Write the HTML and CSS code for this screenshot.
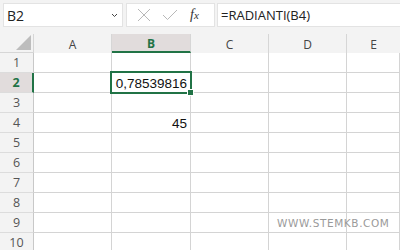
FILE: index.html
```html
<!DOCTYPE html>
<html>
<head>
<meta charset="utf-8">
<link rel="stylesheet" href="styles.css">
</head>
<body>
<div class="app">
  <div class="toolbar">
    <div class="namebox">
      <span class="name">B2</span>
      <svg class="chev" width="7" height="5" viewBox="0 0 7 5"><path d="M1 1 L3.5 3.5 L6 1" fill="none" stroke="#444" stroke-width="1"/></svg>
    </div>
    <div class="fxbox">
      <svg class="ico" width="14" height="14" viewBox="0 0 14 14"><path d="M1 1 L13 13 M13 1 L1 13" stroke="#b8b8b8" stroke-width="1" fill="none"/></svg>
      <svg class="ico" width="16" height="12" viewBox="0 0 16 12"><path d="M1 6 L5.5 10.5 L15 1" stroke="#b8b8b8" stroke-width="1" fill="none"/></svg>
      <span class="fx"><i>f</i><span class="x">x</span></span>
    </div>
    <div class="formula">=RADIANTI(B4)</div>
  </div>
  <div class="sheet">
    <div class="grid">
      <div class="hdr corner"><span class="tri"></span></div>
      <div class="hdr col">A</div>
      <div class="hdr col sel">B</div>
      <div class="hdr col">C</div>
      <div class="hdr col">D</div>
      <div class="hdr col last">E</div>

      <div class="hdr row">1</div><div class="c"></div><div class="c"></div><div class="c"></div><div class="c"></div><div class="c"></div>
      <div class="hdr row sel">2</div><div class="c"></div><div class="c active"><span class="val">0,78539816</span><span class="handle"></span></div><div class="c"></div><div class="c"></div><div class="c"></div>
      <div class="hdr row">3</div><div class="c"></div><div class="c"></div><div class="c"></div><div class="c"></div><div class="c"></div>
      <div class="hdr row">4</div><div class="c"></div><div class="c num">45</div><div class="c"></div><div class="c"></div><div class="c"></div>
      <div class="hdr row">5</div><div class="c"></div><div class="c"></div><div class="c"></div><div class="c"></div><div class="c"></div>
      <div class="hdr row">6</div><div class="c"></div><div class="c"></div><div class="c"></div><div class="c"></div><div class="c"></div>
      <div class="hdr row">7</div><div class="c"></div><div class="c"></div><div class="c"></div><div class="c"></div><div class="c"></div>
      <div class="hdr row">8</div><div class="c"></div><div class="c"></div><div class="c"></div><div class="c"></div><div class="c"></div>
      <div class="hdr row">9</div><div class="c"></div><div class="c"></div><div class="c"></div><div class="c"></div><div class="c"></div>
      <div class="hdr row">10</div><div class="c"></div><div class="c"></div><div class="c"></div><div class="c"></div><div class="c"></div>
    </div>
    <div class="watermark">WWW.STEMKB.COM</div>
  </div>
</div>
</body>
</html>
```
FILE: styles.css
```css
html, body {
  margin: 0;
  padding: 0;
  background: #f3f3f3;
  width: 400px;
  height: 250px;
  overflow: hidden;
}
.app {
  font-family: "Open Sans", "Noto Sans", sans-serif;
}
.toolbar {
  display: flex;
  align-items: stretch;
  height: 24px;
  padding: 3px 0 7px 3px;
  gap: 3px;
}
.namebox {
  width: 120px;
  background: #fff;
  border: 1px solid #e3e3e3;
  box-sizing: border-box;
  display: flex;
  align-items: center;
  justify-content: space-between;
  padding: 0 4px 0 3px;
}
.name {
  font-size: 14px;
  color: #222;
}
.chev { margin-top: 1px; }
.fxbox {
  width: 89px;
  background: #fff;
  border: 1px solid #e3e3e3;
  box-sizing: border-box;
  display: flex;
  align-items: center;
  padding: 0 0 0 10px;
  gap: 11px;
}
.fx {
  font-family: "Liberation Serif", serif;
  font-size: 14px;
  color: #333;
  margin-left: 1px;
}
.fx .x { font-size: 11px; font-style: italic; }
.formula {
  flex: 1;
  background: #fff;
  border: 1px solid #e3e3e3;
  border-right: none;
  box-sizing: border-box;
  font-size: 13px;
  color: #222;
  padding-left: 3px;
  display: flex;
  align-items: center;
  margin-left: -1px;
}
.sheet {
  position: relative;
}
.grid {
  display: grid;
  grid-template-columns: 34px 78px 79px 78px 78px 53px;
  grid-template-rows: 19px repeat(10, 20px);
}
.hdr {
  background: #f3f3f3;
  color: #444;
  font-size: 12px;
  display: flex;
  align-items: center;
  justify-content: center;
  box-sizing: border-box;
}
.hdr.col {
  border-right: 1px solid #d6d6d6;
  padding-top: 1px;
}
.hdr.col.last { border-right: none; }
.hdr.row {
  border-right: 1px solid #c8c8c8;
  border-bottom: 1px solid #dcdcdc;
  font-size: 12.5px;
  color: #555;
}
.hdr.col.sel {
  background: #e1dcdc;
  border-bottom: 2px solid #217346;
  color: #217346;
  font-weight: bold;
  padding-top: 2px;
}
.hdr.row.sel {
  background: #e1dcdc;
  border-right: 2px solid #217346;
  color: #217346;
  font-weight: bold;
}
.corner {
  position: relative;
  border-right: 1px solid #d6d6d6;
  border-bottom: 1px solid #d6d6d6;
}
.tri {
  position: absolute;
  right: 2px;
  bottom: 2px;
  width: 0;
  height: 0;
  border-left: 15px solid transparent;
  border-bottom: 15px solid #bdbdbd;
}
.c {
  background: #fff;
  border-right: 1px solid #d4d4d4;
  border-bottom: 1px solid #d4d4d4;
  box-sizing: border-box;
  font-family: "Liberation Sans", Arial, sans-serif;
  font-size: 13.5px;
  color: #111;
  display: flex;
  align-items: center;
  justify-content: flex-end;
  padding-right: 3px;
}
.c.num { padding-top: 2px; }
.c.active {
  position: relative;
}
.c.active::before {
  content: "";
  position: absolute;
  left: -2px;
  top: -2px;
  right: -2px;
  bottom: -2px;
  border: 2px solid #217346;
  pointer-events: none;
}
.val { position: relative; padding-top: 1px; }
.handle {
  position: absolute;
  right: -4px;
  bottom: -4px;
  width: 5px;
  height: 5px;
  background: #217346;
  border: 1px solid #fff;
}
.watermark {
  position: absolute;
  left: 277px;
  top: 183px;
  font-family: "DejaVu Sans", sans-serif;
  font-size: 10.5px;
  letter-spacing: 0.6px;
  color: #9a9a9a;
}
```
